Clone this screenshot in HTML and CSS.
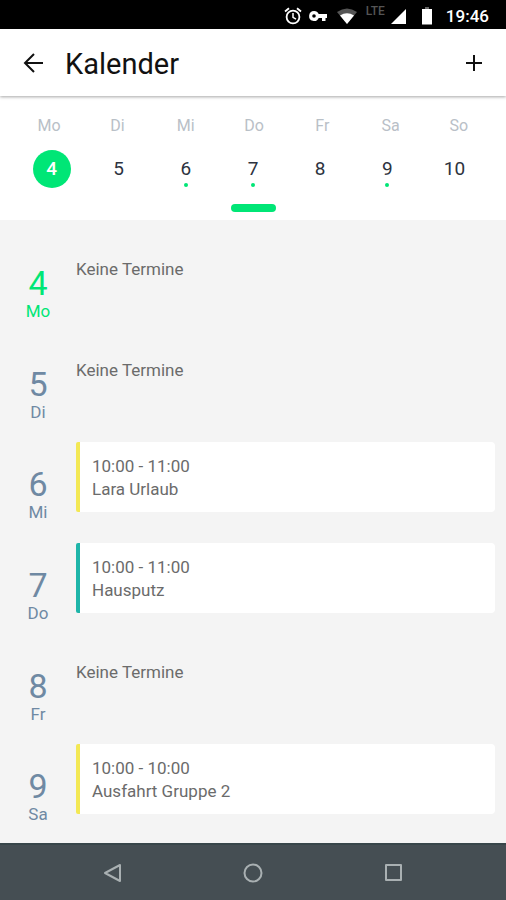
FILE: index.html
```html
<!DOCTYPE html>
<html lang="de">
<head>
<meta charset="utf-8">
<meta name="viewport" content="width=device-width, initial-scale=1">
<title>Kalender</title>
<link rel="stylesheet" href="styles.css">
</head>
<body>
<div class="status">
  <svg class="status-icon" width="18" height="18" viewBox="0 0 18 18" fill="none" stroke="#fff" stroke-width="1.8"><circle cx="9" cy="10" r="6.4"/><path d="M9 6v4.400l3 1.800" stroke-width="1.500"/><path d="M1 4.500l4-3.300M17 4.500l-4-3.300"/></svg>
  <svg class="status-icon key" width="20" height="18" viewBox="0 0 20 18"><path fill="#fff" fill-rule="evenodd" d="M6 4a5 5 0 1 0 4.700 7H14v3h3.500v-3H19V7h-8.300A5 5 0 0 0 6 4zm0 3.200a1.800 1.800 0 1 1 0 3.600 1.800 1.800 0 0 1 0-3.600z"/></svg>
  <svg class="status-icon wifi" width="22" height="18" viewBox="0 0 22 18"><path fill="#555" d="M1 5Q11-2 21 5L11 17z"/><path fill="#fff" d="M4 8.500Q11 4 18 8.500L11 17z"/></svg>
  <span class="lte">LTE</span>
  <svg class="status-icon signal" width="16" height="18" viewBox="0 0 16 18"><path fill="#fff" d="M15 2v15H0z"/></svg>
  <svg class="status-icon battery" width="12" height="18" viewBox="0 0 12 18"><path fill="#666" d="M4 0h4v2H4z"/><path fill="#fff" d="M1 2h10v15.500H1z"/></svg>
  <span class="clock">19:46</span>
</div>

<header class="bar">
  <button class="icon-button" aria-label="Zurück"><svg width="20" height="20" viewBox="0 0 20 20" fill="none" stroke="#111" stroke-width="2"><path d="M20 10H2M11 1l-9 9 9 9"/></svg></button>
  <h1 class="title">Kalender</h1>
  <button class="icon-button" aria-label="Termin hinzufügen"><svg width="18" height="18" viewBox="0 0 18 18" fill="none" stroke="#111" stroke-width="2"><path d="M9 1v16M1 9h16"/></svg></button>
</header>

<section class="week">
  <div class="weekdays"><span>Mo</span><span>Di</span><span>Mi</span><span>Do</span><span>Fr</span><span>Sa</span><span>So</span></div>
  <div class="dates">
    <button class="date selected">4</button>
    <button class="date">5</button>
    <button class="date marked">6</button>
    <button class="date marked">7</button>
    <button class="date">8</button>
    <button class="date marked">9</button>
    <button class="date">10</button>
  </div>
  <div class="handle"></div>
</section>

<main class="agenda">
  <section class="day today"><h2 class="day-label"><span class="day-number">4</span><span class="day-name">Mo</span></h2><p class="empty">Keine Termine</p></section>
  <section class="day"><h2 class="day-label"><span class="day-number">5</span><span class="day-name">Di</span></h2><p class="empty">Keine Termine</p></section>
  <section class="day"><h2 class="day-label"><span class="day-number">6</span><span class="day-name">Mi</span></h2><article class="event yellow"><p>10:00 - 11:00</p><p>Lara Urlaub</p></article></section>
  <section class="day"><h2 class="day-label"><span class="day-number">7</span><span class="day-name">Do</span></h2><article class="event teal"><p>10:00 - 11:00</p><p>Hausputz</p></article></section>
  <section class="day"><h2 class="day-label"><span class="day-number">8</span><span class="day-name">Fr</span></h2><p class="empty">Keine Termine</p></section>
  <section class="day"><h2 class="day-label"><span class="day-number">9</span><span class="day-name">Sa</span></h2><article class="event yellow"><p>10:00 - 10:00</p><p>Ausfahrt Gruppe 2</p></article></section>
</main>

<nav class="system">
  <button class="icon-button" aria-label="Zurück"><svg width="20" height="20" viewBox="0 0 20 20" fill="none" stroke="#a9b0b2" stroke-width="2" stroke-linejoin="round"><path d="M17 2v16L2 10z"/></svg></button>
  <button class="icon-button" aria-label="Startbildschirm"><svg width="20" height="20" viewBox="0 0 20 20" fill="none" stroke="#a9b0b2" stroke-width="2"><circle cx="10" cy="10" r="8.500"/></svg></button>
  <button class="icon-button" aria-label="Letzte Apps"><svg width="20" height="20" viewBox="0 0 20 20" fill="none" stroke="#a9b0b2" stroke-width="2" stroke-linejoin="round"><path d="M3 2h15v15H3z"/></svg></button>
</nav>
</body>
</html>
```
FILE: styles.css
```css
* {
  box-sizing: border-box;
}

body {
  margin: 0;
  min-height: 100vh;
  display: flex;
  flex-direction: column;
  background: #f4f4f4;
  color: #6b6b6b;
  font-family: Roboto, sans-serif;
  font-size: 17px;
  line-height: 23px;
}

h1,
h2,
p {
  margin: 0;
  font-weight: 400;
}

button {
  padding: 0;
  border: 0;
  background: none;
  font: inherit;
  color: inherit;
}

svg {
  display: block;
}

.status {
  height: 29px;
  padding: 3px 17px 0 0;
  display: flex;
  justify-content: flex-end;
  align-items: center;
  background: #000;
  color: #fff;
}

.key {
  margin-left: 6px;
}

.wifi {
  margin-left: 8px;
}

.lte {
  margin-left: 8px;
  align-self: flex-start;
  color: #555;
  font-size: 12px;
  font-weight: 500;
  line-height: 16px;
}

.signal {
  margin-left: 6px;
}

.battery {
  margin: 0 13px 0 14px;
}

.clock {
  font-size: 17px;
  font-weight: 500;
}

.bar {
  position: relative;
  height: 67px;
  padding: 0 23px;
  display: flex;
  align-items: center;
  background: #fff;
  color: #111;
  box-shadow: 0 1px 3px rgba(0, 0, 0, 0.35);
}

.title {
  flex: 1;
  padding-top: 2px;
  margin-left: 22px;
  font-size: 29px;
  line-height: 36px;
}

.week {
  padding: 18px 0 8px;
  background: #fff;
}

.weekdays,
.dates {
  display: grid;
  grid-template-columns: repeat(7, 1fr);
  text-align: center;
}

.weekdays {
  padding: 0 13px 0 15px;
  color: #b9c0c7;
  font-size: 16px;
}

.dates {
  padding: 13px 18px 0;
  justify-items: center;
  color: #2d3340;
  font-size: 19px;
}

.date {
  position: relative;
  width: 38px;
  height: 38px;
  padding-bottom: 2px;
  border-radius: 50%;
}

.selected {
  background: #00e676;
  color: #fff;
  font-weight: 500;
}

.marked::after {
  content: "";
  position: absolute;
  left: 17px;
  bottom: 1px;
  width: 4px;
  height: 4px;
  border-radius: 50%;
  background: #00e676;
}

.handle {
  width: 45px;
  height: 8px;
  margin: 16px auto 0;
  border-radius: 4px;
  background: #00e676;
}

.agenda {
  flex: 1;
  padding: 21px 11px 15px 0;
  display: flex;
  flex-direction: column;
  gap: 17px;
}

.day {
  flex: 1;
  display: grid;
  grid-template-columns: 76px 1fr;
  align-items: start;
}

.day-label {
  padding-top: 22px;
  display: flex;
  flex-direction: column;
  align-items: center;
  color: #6f89a3;
}

.day-number {
  font-size: 34px;
  line-height: 40px;
}

.day-name {
  font-size: 17px;
  line-height: 16px;
}

.today .day-label {
  color: #00e676;
}

.empty {
  padding-top: 17px;
}

.event {
  padding: 13px 12px 11px;
  border-left: 4px solid;
  border-radius: 2px 4px 4px 2px;
  background: #fff;
}

.yellow {
  border-color: #f3e854;
}

.teal {
  border-color: #1fb5a9;
}

.system {
  height: 57px;
  padding: 0 43px;
  display: grid;
  grid-template-columns: repeat(3, 1fr);
  justify-items: center;
  align-items: center;
  border-top: 2px solid #38464a;
  background: #454e53;
}
```
